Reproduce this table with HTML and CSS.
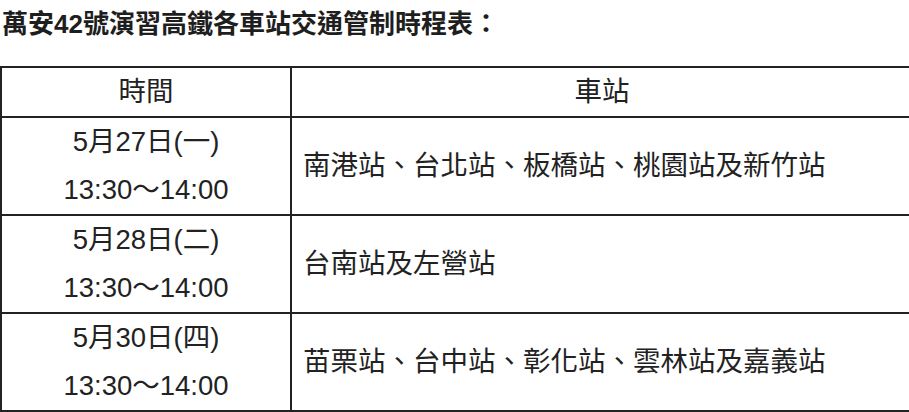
FILE: index.html
```html
<!DOCTYPE html>
<html lang="zh-Hant">
<head>
<meta charset="utf-8">
<title>萬安42號演習高鐵各車站交通管制時程表</title>
<link rel="stylesheet" href="styles.css">
</head>
<body>
<h1 class="title">萬安42號演習高鐵各車站交通管制時程表：</h1>
<table class="schedule">
  <colgroup>
    <col class="col-time">
    <col class="col-station">
  </colgroup>
  <thead>
    <tr><th>時間</th><th>車站</th></tr>
  </thead>
  <tbody>
    <tr>
      <td class="time">5月27日(一)<br>13:30～14:00</td>
      <td class="station">南港站、台北站、板橋站、桃園站及新竹站</td>
    </tr>
    <tr>
      <td class="time">5月28日(二)<br>13:30～14:00</td>
      <td class="station">台南站及左營站</td>
    </tr>
    <tr>
      <td class="time">5月30日(四)<br>13:30～14:00</td>
      <td class="station">苗栗站、台中站、彰化站、雲林站及嘉義站</td>
    </tr>
  </tbody>
</table>
</body>
</html>
```
FILE: styles.css
```css
html, body {
  margin: 0;
  padding: 0;
  background: #ffffff;
}
body {
  font-family: "Liberation Sans", "Noto Sans CJK TC", sans-serif;
  color: #222222;
  overflow: hidden;
}
.title {
  margin: 0;
  padding-left: 2px;
  font-size: 26px;
  font-weight: 700;
  line-height: 48px;
  color: #1e1e1e;
  white-space: nowrap;
}
.schedule {
  margin-top: 18px;
  border-collapse: collapse;
  width: 914px;
  table-layout: fixed;
  font-size: 27.5px;
}
.col-time { width: 290px; }
.schedule th,
.schedule td {
  border: 2px solid #222222;
  padding: 0;
  line-height: 48px;
  font-weight: 400;
  vertical-align: middle;
  white-space: nowrap;
}
.schedule th { text-align: center; }
.schedule td.time { text-align: center; }
.schedule td.station { text-align: left; padding-left: 11px; }
```
